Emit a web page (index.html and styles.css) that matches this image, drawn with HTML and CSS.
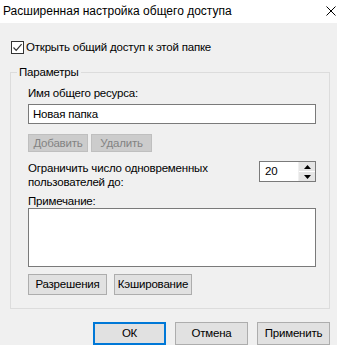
FILE: index.html
```html
<!DOCTYPE html>
<html lang="ru">
<head>
<meta charset="utf-8">
<link rel="stylesheet" href="styles.css">
</head>
<body>
<div class="window">
  <div class="titlebar">
    <span class="title">Расширенная настройка общего доступа</span>
    <svg class="close" width="10" height="10" viewBox="0 0 10 10"><path d="M0.5 0.5 L9.5 9.5 M9.5 0.5 L0.5 9.5" stroke="#000" stroke-width="1" fill="none"/></svg>
  </div>
  <div class="body">
    <label class="check-row">
      <span class="checkbox"><svg width="11" height="11" viewBox="0 0 11 11"><path d="M1.5 5.5 L4.2 8.3 L9.6 2.2" stroke="#333" stroke-width="1.2" fill="none"/></svg></span>
      <span>Открыть общий доступ к этой папке</span>
    </label>
    <fieldset class="group">
      <legend class="legend">Параметры</legend>
      <div class="group-inner">
        <div class="label">Имя общего ресурса:</div>
        <div class="textbox">Новая папка</div>
        <div class="btn-row small">
          <span class="btn disabled w60">Добавить</span>
          <span class="btn disabled w61">Удалить</span>
        </div>
        <div class="limit-row">
          <div class="limit-label">Ограничить число одновременных<br>пользователей до:</div>
          <div class="spinner">
            <span class="spin-value">20</span>
            <span class="spin-buttons">
              <span class="spin-btn"><svg width="7" height="4" viewBox="0 0 7 4"><path d="M3.5 0 L7 4 L0 4 Z" fill="#000"/></svg></span>
              <span class="spin-btn"><svg width="7" height="4" viewBox="0 0 7 4"><path d="M0 0 L7 0 L3.5 4 Z" fill="#000"/></svg></span>
            </span>
          </div>
        </div>
        <div class="label note-label">Примечание:</div>
        <div class="textarea"></div>
        <div class="btn-row perms">
          <span class="btn w79">Разрешения</span>
          <span class="btn w78">Кэширование</span>
        </div>
      </div>
    </fieldset>
    <div class="footer">
      <span class="btn big default">ОК</span>
      <span class="btn big">Отмена</span>
      <span class="btn big">Применить</span>
    </div>
  </div>
</div>
</body>
</html>
```

FILE: styles.css
```css
html, body {
  margin: 0;
  padding: 0;
}
body {
  background: #f0f0f0;
  font-family: "Liberation Sans", Arial, sans-serif;
  font-size: 11.5px;
  letter-spacing: -0.2px;
  line-height: 15px;
  color: #000;
  width: 337px;
  height: 345px;
  overflow: hidden;
}
.titlebar {
  height: 23px;
  background: #fff;
  display: flex;
  align-items: center;
  justify-content: space-between;
  padding: 0 1px 0 3px;
}
.title {
  font-size: 12px;
  letter-spacing: 0;
}
.close {
  display: block;
  margin-top: -2px;
}
.body {
  padding: 0 7px 0 10px;
}
.check-row {
  display: flex;
  align-items: center;
  gap: 2px;
  margin-top: 17px;
  height: 15px;
}
.checkbox {
  width: 11px;
  height: 11px;
  margin-left: 1px;
  border: 1px solid #333;
  background: #fff;
  display: flex;
  align-items: center;
  justify-content: center;
}
.checkbox svg {
  display: block;
}
.group {
  margin: 10px 0 0 0;
  padding: 0;
  border: 1px solid #dcdcdc;
  width: 320px;
  box-sizing: border-box;
  height: 244px;
}
.legend {
  padding: 0 2px;
  margin-left: 6px;
  line-height: 15px;
}
.group-inner {
  padding: 6px 13px 0 17px;
}
.label {
  height: 15px;
}
.textbox {
  margin-top: 3px;
  height: 18px;
  border: 1px solid #7a7a7a;
  background: #fff;
  padding: 0 4px;
  line-height: 18px;
}
.btn-row {
  display: flex;
  gap: 3px;
}
.btn-row.small {
  margin-top: 10px;
}
.btn {
  box-sizing: border-box;
  border: 1px solid #adadad;
  background: #e1e1e1;
  display: flex;
  align-items: center;
  justify-content: center;
  height: 21px;
}
.btn.disabled {
  height: 18px;
  background: #cccccc;
  border-color: #bfbfbf;
  color: #838383;
}
.w60 { width: 60px; }
.w61 { width: 61px; }
.w79 { width: 79px; }
.w78 { width: 78px; }
.limit-row {
  margin-top: 9px;
  display: flex;
  justify-content: space-between;
  align-items: flex-start;
}
.limit-label {
  line-height: 14px;
}
.spinner {
  width: 57px;
  height: 21px;
  box-sizing: border-box;
  border: 1px solid #7a7a7a;
  background: #fff;
  display: flex;
}
.spin-value {
  flex: 1;
  padding-left: 5px;
  line-height: 19px;
}
.spin-buttons {
  width: 16px;
  display: flex;
  flex-direction: column;
  gap: 1px;
  background: #fff;
  border-left: 1px solid #f0f0f0;
}
.spin-btn {
  flex: 1;
  background: #e5e5e5;
  display: flex;
  align-items: center;
  justify-content: center;
}
.spin-btn svg { display: block; }
.note-label {
  margin-top: 6px;
  height: 13px;
  line-height: 13px;
}
.textarea {
  height: 57px;
  border: 1px solid #7a7a7a;
  background: #fff;
}
.btn-row.perms {
  margin-top: 7px;
  gap: 7px;
}
.footer {
  margin-top: 13px;
  display: flex;
  justify-content: flex-end;
  gap: 9px;
}
.btn.big {
  width: 73px;
  height: 23px;
}
.btn.default {
  border: 2px solid #0078d7;
}
```
